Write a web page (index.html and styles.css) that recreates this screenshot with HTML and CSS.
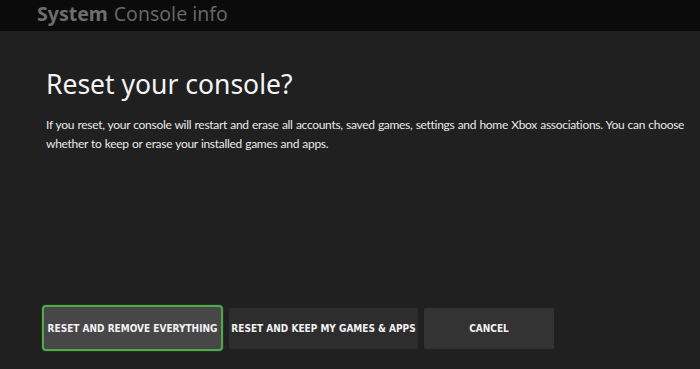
FILE: index.html
```html
<!DOCTYPE html>
<html>
<head>
<meta charset="utf-8">
<link rel="stylesheet" href="styles.css">
</head>
<body>
<header class="topbar">
  <span class="crumb-strong">System</span>
  <span class="crumb">Console info</span>
</header>
<main class="dialog">
  <h1 class="title">Reset your console?</h1>
  <p class="desc">If you reset, your console will restart and erase all accounts, saved games, settings and home Xbox associations. You can choose whether to keep or erase your installed games and apps.</p>
  <div class="actions">
    <button class="btn btn-focus">RESET AND REMOVE EVERYTHING</button>
    <button class="btn btn-keep">RESET AND KEEP MY GAMES &amp; APPS</button>
    <button class="btn btn-cancel">CANCEL</button>
  </div>
</main>
</body>
</html>
```
FILE: styles.css
```css
html, body {
  margin: 0;
  padding: 0;
  height: 100%;
}
body {
  background: #202020;
  font-family: "Noto Sans", sans-serif;
  color: #fff;
  display: flex;
  flex-direction: column;
  overflow: hidden;
}
.topbar {
  height: 31px;
  background: #0b0b0b;
  padding-left: 37px;
  display: flex;
  align-items: flex-start;
  gap: 6px;
  font-size: 19.5px;
  line-height: 27px;
  box-sizing: border-box;
  overflow: hidden;
}
.crumb-strong {
  font-weight: 700;
  color: #6e6e6e;
}
.crumb {
  color: #666;
}
.dialog {
  flex: 1;
  padding: 0 0 0 46px;
  display: flex;
  flex-direction: column;
}
.title {
  margin: 36px 0 0 0;
  font-size: 26.5px;
  font-weight: 400;
  line-height: 34px;
  color: #f4f4f4;
}
.desc {
  margin: 14px 0 0 0;
  font-family: "Lato", sans-serif;
  font-size: 12px;
  letter-spacing: -0.3px;
  word-spacing: 0.5px;
  line-height: 19px;
  color: #e8e8e8;
  max-width: 648px;
}
.actions {
  margin-top: auto;
  margin-bottom: 18px;
  margin-left: -4px;
  display: flex;
  align-items: center;
  gap: 6px;
}
.btn {
  font-family: "DejaVu Sans Condensed", "DejaVu Sans", sans-serif;
  font-weight: 700;
  font-size: 10px;
  color: #f2f2f2;
  border: none;
  border-radius: 2px;
  height: 41px;
  padding: 0;
  cursor: pointer;
}
.btn-focus {
  width: 181px;
  height: 46px;
  background: #474747;
  border: 2px solid #58a552;
  border-radius: 4px;
  box-shadow: 0 0 0 1px #1c3a1a;
}
.btn-keep {
  width: 189px;
  background: #2d2d2d;
}
.btn-cancel {
  width: 130px;
  background: #333333;
}
```
